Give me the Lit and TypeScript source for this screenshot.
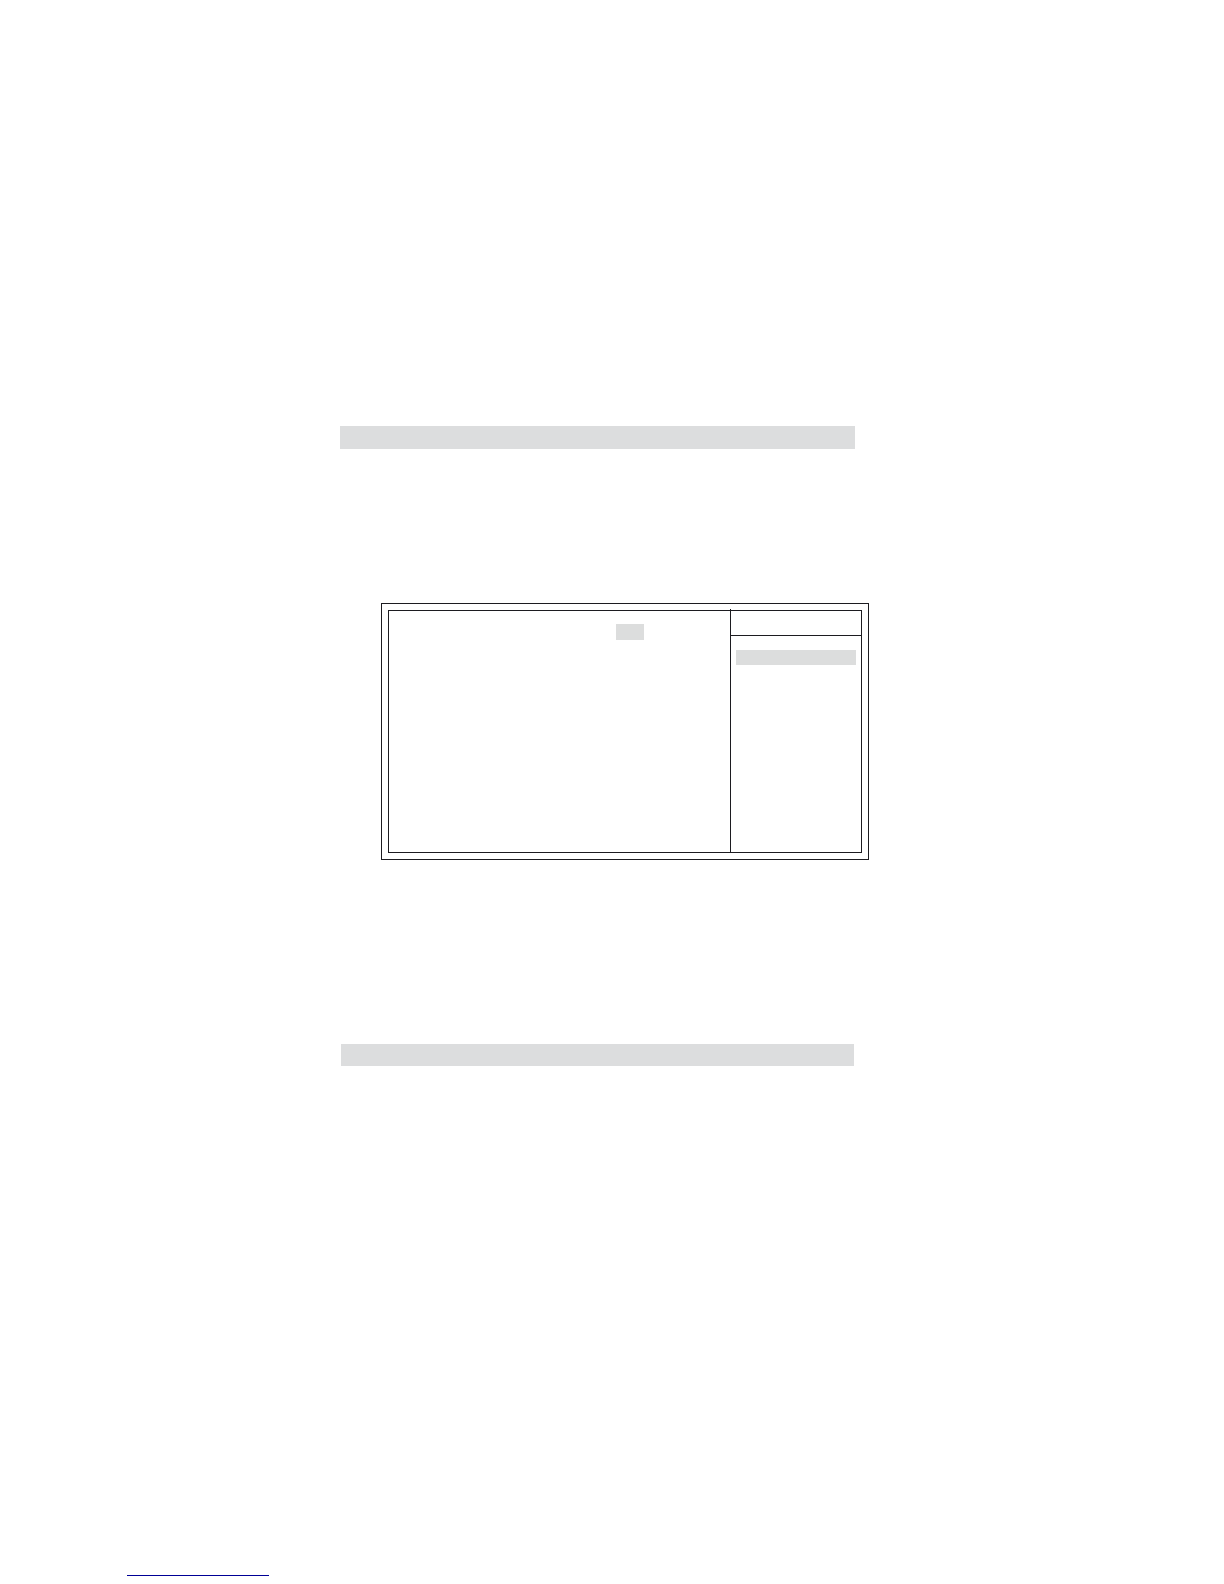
import { LitElement, html, css } from "lit";
import { customElement } from "lit/decorators.js";

// Two-pane screen: field area on the left, help column on the right.
@customElement("setup-screen")
export class SetupScreen extends LitElement {
  static styles = css`
    :host {
      display: block;
      box-sizing: border-box;
      padding: 6px;
      border: 1px solid #1c1b20;
      color: #1c1b20;
    }
    .panes {
      display: grid;
      grid-template-columns: 341fr 131fr;
      min-height: 241px;
      border: 1px solid #1c1b20;
    }
    .fields {
      display: grid;
      grid-template-columns: 227fr 28fr 86fr;
      align-content: start;
      padding-top: 13px;
    }
    .value {
      grid-column: 2;
      height: 16px;
      background: #dcdddd;
    }
    /* The divider rises slightly above the inner frame. */
    .help {
      margin-top: -2px;
      border-left: 1px solid #1c1b20;
    }
    .help-title {
      height: 26px;
      border-bottom: 1px solid #1c1b20;
    }
    .help-level {
      height: 15px;
      margin: 14px 5px 0;
      background: #dcdddd;
    }
  `;

  render() {
    return html`
      <section class="panes">
        <div class="fields"><div class="value"></div></div>
        <aside class="help">
          <header class="help-title"></header>
          <div class="help-level"></div>
        </aside>
      </section>
    `;
  }
}

@customElement("app-root")
export class AppRoot extends LitElement {
  static styles = css`
    :host {
      display: block;
      background: #ffffff;
      font-family: "Liberation Sans", Arial, sans-serif;
    }
    .page {
      display: flex;
      flex-direction: column;
      box-sizing: border-box;
      min-height: 100vh;
      padding: 426px 0 8px;
    }
    .row {
      display: grid;
    }
    .heading {
      grid-template-columns: 340fr 515fr 369fr;
    }
    .screen {
      grid-template-columns: 381fr 488fr 355fr;
      padding: 154px 0 184px;
    }
    .subheading {
      grid-template-columns: 341fr 513fr 370fr;
    }
    .footer {
      grid-template-columns: 127fr 142fr 955fr;
      margin-top: auto;
    }
    .middle {
      grid-column: 2;
    }
    .band {
      height: 23px;
      background: #dcddde;
    }
    .subheading .band {
      height: 22px;
    }
    .link {
      display: block;
      border-bottom: 1px solid #000096;
    }
  `;

  render() {
    return html`
      <main class="page">
        <div class="row heading"><div class="middle band"></div></div>
        <div class="row screen"><setup-screen class="middle"></setup-screen></div>
        <div class="row subheading"><div class="middle band"></div></div>
        <footer class="row footer"><a class="middle link" href="#"></a></footer>
      </main>
    `;
  }
}
